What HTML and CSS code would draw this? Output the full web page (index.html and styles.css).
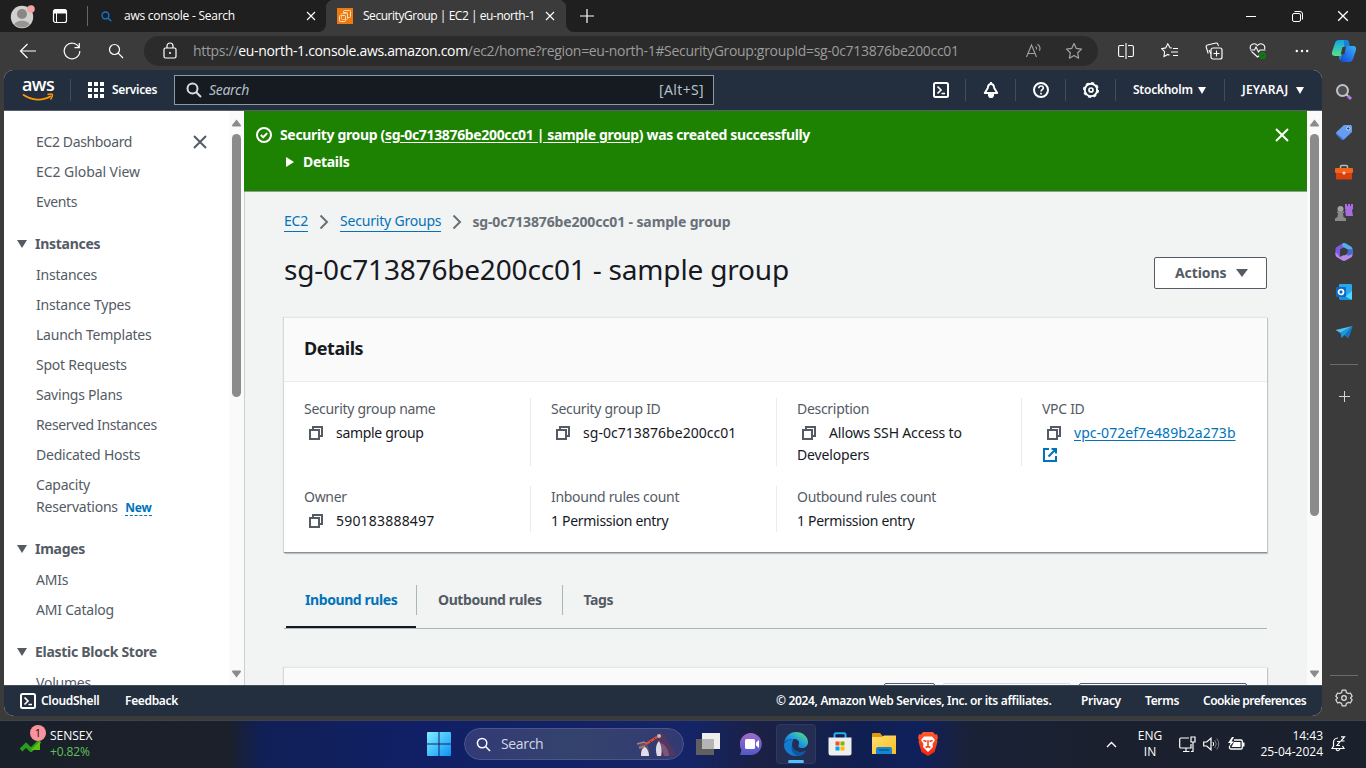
FILE: index.html
```html
<!DOCTYPE html>
<html lang="en">
<head>
<meta charset="utf-8">
<title>SecurityGroup | EC2 | eu-north-1</title>
<link rel="stylesheet" href="styles.css">
</head>
<body>
<svg class="defs" aria-hidden="true">
  <defs>
    <symbol id="copy" viewBox="0 0 16 16"><path d="M2 5h9v9H2z M5 5V2h9v9h-3" fill="none" stroke="#545b64" stroke-width="2"/></symbol>
    <symbol id="shell" viewBox="0 0 16 16"><rect x="1" y="1" width="14" height="14" rx="1.500" fill="none" stroke="#fff" stroke-width="2"/><path d="M4.500 4.500 8 8l-3.500 3.500M8.500 11.500h3.500" fill="none" stroke="#fff" stroke-width="1.700"/></symbol>
    <symbol id="cross" viewBox="0 0 16 16"><path d="m2 2 12 12M14 2 2 14" fill="none" stroke="currentColor" stroke-width="2"/></symbol>
    <symbol id="thin-cross" viewBox="0 0 10 10"><path d="m1 1 8 8M9 1 1 9" fill="none" stroke="currentColor" stroke-width="1.100"/></symbol>
    <symbol id="down" viewBox="0 0 10 8"><path d="M0 0h10L5 8z" fill="currentColor"/></symbol>
    <symbol id="lens" viewBox="0 0 16 16"><circle cx="6.500" cy="6.500" r="5" fill="none" stroke="currentColor" stroke-width="var(--w)"/><path d="m10.200 10.200 4.800 4.800" fill="none" stroke="currentColor" stroke-width="var(--w)"/></symbol>
    <symbol id="plus" viewBox="0 0 14 14"><path d="M7 0v14M0 7h14" stroke="currentColor" stroke-width="1.200"/></symbol>
    <linearGradient id="gWin" x1="0" y1="0" x2="1" y2="1"><stop offset="0" stop-color="#7ff0ff"/><stop offset="1" stop-color="#0c92f5"/></linearGradient>
    <linearGradient id="gEdge" x1="0" y1="1" x2="1" y2="0"><stop offset="0" stop-color="#0c59a4"/><stop offset=".5" stop-color="#1b9de2"/><stop offset="1" stop-color="#66eb6e"/></linearGradient>
    <linearGradient id="gCop" x1="0" y1="0" x2="0" y2="1"><stop offset="0" stop-color="#0fa5e9"/><stop offset="1" stop-color="#5be08a"/></linearGradient>
    <linearGradient id="gCop2" x1="0" y1="1" x2="1" y2="0"><stop offset="0" stop-color="#1746e0"/><stop offset="1" stop-color="#35b6f5"/></linearGradient>
    <linearGradient id="gPurple" x1="0" y1="0" x2="0" y2="1"><stop offset="0" stop-color="#a06ac8"/><stop offset="1" stop-color="#5059c9"/></linearGradient>
    <linearGradient id="gFolder" x1="0" y1="0" x2="1" y2="1"><stop offset="0" stop-color="#ffdf70"/><stop offset="1" stop-color="#fbbc24"/></linearGradient>
    <linearGradient id="gBrave" x1="0" y1="0" x2="0" y2="1"><stop offset="0" stop-color="#ff5a2a"/><stop offset="1" stop-color="#f4250c"/></linearGradient>
  </defs>
</svg>

<header class="titlebar">
  <div class="tb-left">
    <svg class="avatar" width="28" height="28" viewBox="0 0 28 28"><circle cx="14" cy="15" r="11.200" fill="#d2d0ce"/><circle cx="14" cy="12" r="5" fill="#8a8886"/><path d="M6.500 22.500c1.500-5 13.500-5 15 0a11 11 0 0 1-15 0z" fill="#979593"/><circle cx="23" cy="7" r="3.800" fill="#f6a3a0"/></svg>
    <svg class="tabicon" width="16" height="16" viewBox="0 0 16 16"><rect x="1.500" y="1.500" width="13" height="13" rx="2" fill="none" stroke="#fff" stroke-width="1.200"/><path d="M1.500 3a1.500 1.500 0 0 1 1.500-1.500h10A1.500 1.500 0 0 1 14.500 3v2.500h-13z" fill="#fff"/><path d="M4.500 5v9" stroke="#fff"/></svg>
    <i class="tb-sep"></i>
  </div>
  <div class="tab tab-idle"><svg class="tab-lens" width="11" height="11"><use href="#lens"/></svg><span class="tab-title">aws console - Search</span><svg class="tab-x" width="10" height="10"><use href="#thin-cross"/></svg></div>
  <div class="tab tab-active">
    <svg width="16" height="16" viewBox="0 0 16 16"><path d="M0 0h16v16H0z" fill="#ed7a11"/><rect x="2.500" y="7.500" width="6" height="6" rx="1" fill="none" stroke="#ffe0bd"/><rect x="4.500" y="5.500" width="6" height="6" rx="1" fill="none" stroke="#f9c48f"/><path d="M6.500 3.500q0-1 1-1h5q1 0 1 1v5q0 1-1 1h-2v-4q0-1-1-1h-3z" fill="none" stroke="#ffe0bd"/></svg>
    <span class="tab-title tab-title-active">SecurityGroup | EC2 | eu-north-1</span><svg class="tab-x" width="10" height="10"><use href="#thin-cross"/></svg>
  </div>
  <svg class="newtab" width="14" height="14"><use href="#plus"/></svg>
  <div class="winbtns">
    <span><svg width="10" height="10" viewBox="0 0 10 10"><path d="M0 5.500h10" stroke="#fff"/></svg></span>
    <span><svg width="11" height="11" viewBox="0 0 11 11"><rect x=".5" y="2.500" width="8" height="8" rx="1.500" fill="none" stroke="#fff"/><path d="M2.500.5H8A2.500 2.500 0 0 1 10.500 3v5.500" fill="none" stroke="#fff"/></svg></span>
    <span><svg width="12" height="12"><use href="#thin-cross"/></svg></span>
  </div>
</header>

<div class="toolbar">
  <div class="tool-slots">
    <span><svg width="18" height="16" viewBox="0 0 18 16"><path d="M17 8H1.500M8.500 1l-7 7 7 7" fill="none" stroke="#fff" stroke-width="1.200"/></svg></span>
    <span><svg width="18" height="18" viewBox="0 0 18 18"><path d="M16 5.500A7.800 7.800 0 1 0 16.800 9M16.300 1v4.700h-4.800" fill="none" stroke="#fff" stroke-width="1.200"/></svg></span>
    <span><svg width="16" height="16" class="nav-lens"><use href="#lens"/></svg></span>
  </div>
  <div class="address">
    <svg class="lock" width="14" height="18" viewBox="0 0 14 18"><rect x="1" y="6" width="12" height="10" rx="1.500" fill="none" stroke="#fff" stroke-width="1.200"/><path d="M4 6V4a3 3 0 0 1 6 0v2" fill="none" stroke="#fff" stroke-width="1.200"/><circle cx="7" cy="11" r="1" fill="#fff"/></svg>
    <span class="url">https://<b>eu-north-1.console.aws.amazon.com</b>/ec2/home?region=eu-north-1#SecurityGroup:groupId=sg-0c713876be200cc01</span>
    <div class="addr-tools">
      <span><svg width="18" height="16" viewBox="0 0 18 16"><path d="m1.500 14 5-12 5 12M3 10.500h7M10.500 3.500c1 .8 1.300 2 1 3M12.500 1.200c2.200 1.500 3 4 2 6.500" fill="none" stroke="#a3a3a3" stroke-width="1.100"/></svg></span>
      <span><svg width="18" height="18" viewBox="0 0 18 18"><path d="m9 1.500 2.300 4.900 5.200.7-3.800 3.700.9 5.400L9 13.600l-4.600 2.600.9-5.400L1.500 7.100l5.200-.7z" fill="none" stroke="#a3a3a3" stroke-width="1.200" stroke-linejoin="round"/></svg></span>
    </div>
  </div>
  <div class="tool-slots tool-right">
    <span><svg width="16" height="16" viewBox="0 0 16 16"><path d="M6 2.500H2A1.500 1.500 0 0 0 .6 4v8A1.500 1.500 0 0 0 2 13.500h4M10 2.500h4A1.500 1.500 0 0 1 15.400 4v8a1.500 1.500 0 0 1-1.400 1.500h-4M8 0v16" fill="none" stroke="#fff" stroke-width="1.100"/></svg></span>
    <span><svg width="18" height="16" viewBox="0 0 18 16"><path d="M11 5 9 4.800 6.800.8 4.700 4.900l-4 .8 2.900 3-.6 4.700 3.800-2 1.700.9M12 5.500h5M10 9h7M12 12.500h5" fill="none" stroke="#fff" stroke-width="1.100"/></svg></span>
    <span><svg width="18" height="18" viewBox="0 0 18 18"><path d="M13.500 4 12.800 2.200A1.500 1.500 0 0 0 11 1L2.500 3A1.500 1.500 0 0 0 1.200 5l2 6.500M4 8l2 4" fill="none" stroke="#fff" stroke-width="1.100"/><rect x="6" y="6" width="11" height="11" rx="2" fill="#3b3b3b" stroke="#fff" stroke-width="1.200"/><path d="M11.500 8.500v6M8.500 11.500h6" fill="none" stroke="#fff" stroke-width="1.100"/></svg></span>
    <span><svg width="18" height="18" viewBox="0 0 18 18"><path d="M1.500 7C0 2.500 5.500 0 8.500 3.500 11.500 0 17 2.500 15.500 7M1 8h4.500L7 5l2.500 5L11 8h5.500M2.500 9.500l6 5.500 2-1.500" fill="none" stroke="#fff" stroke-width="1.100"/><circle cx="13.500" cy="13.500" r="3.500" fill="#107c10"/><path d="m12 13.500 1 1 2-2" fill="none" stroke="#052"/></svg></span>
    <span><svg width="14" height="4" viewBox="0 0 14 4"><circle cx="1.800" cy="2" r="1.200" fill="#fff"/><circle cx="7" cy="2" r="1.200" fill="#fff"/><circle cx="12.200" cy="2" r="1.200" fill="#fff"/></svg></span>
  </div>
  <svg class="copilot" width="24" height="22" viewBox="0 0 24 22"><path d="M7 0h7.500L12 12q-1 4-4 4H3q-4 0-3-4L3 3Q4 0 7 0z" fill="url(#gCop)"/><path d="M17 22H9l3-12q1-4 4-4h5q4 0 3 4l-3 9q-1 3-4 3z" fill="url(#gCop2)"/><path d="M12 0h3q1.500 0 2 2l.8 4H15q-2 0-3 3L9 20q-1 1-1.500-1L6.500 16H8q3 0 4-4z" fill="#1583dc"/><path d="m10.500 7-1.800 7.500h3.600L14 7z" fill="#3b3b3b"/></svg>
</div>

<div class="middle">
  <div class="page">
    <div class="aws-header">
      <div class="logo"><span>aws</span><svg width="32" height="9" viewBox="0 0 32 9"><path d="M1 1.500C10 8 21 8 29 3" fill="none" stroke="#f90" stroke-width="1.800"/><path d="M25.500 1.500c3-.8 5-.6 5 .2s-.5 3-2 4.800" fill="none" stroke="#f90" stroke-width="1.500"/></svg></div>
      <i class="h-sep"></i>
      <svg class="grid" width="16" height="16" viewBox="0 0 16 16"><path d="M0 0h4v4H0zM6 0h4v4H6zM12 0h4v4h-4zM0 6h4v4H0zM6 6h4v4H6zM12 6h4v4h-4zM0 12h4v4H0zM6 12h4v4H6zM12 12h4v4h-4z" fill="#fff"/></svg>
      <span class="small services">Services</span>
      <div class="aws-search"><svg width="16" height="16"><use href="#lens"/></svg><em>Search</em><span>[Alt+S]</span></div>
      <div class="h-icons">
        <span><svg width="16" height="16"><use href="#shell"/></svg></span>
        <span><svg width="16" height="16" viewBox="0 0 16 16"><path d="M8 2c2.400 0 3 1.800 3.200 4l3 5H1.800l3-5C5 3.800 5.600 2 8 2z" fill="none" stroke="#fff" stroke-width="2" stroke-linejoin="round"/><path d="M7 0h2v2H7zM5 12h6v2l-1.500 2h-3L5 14z" fill="#fff"/></svg></span>
        <span><svg width="16" height="16" viewBox="0 0 16 16"><circle cx="8" cy="8" r="7" fill="none" stroke="#fff" stroke-width="2"/><path d="M5.800 6.200C5.800 3.300 10.300 3.300 10.300 6c0 1.700-2.300 1.800-2.300 3.600M8 10.800v1.600" fill="none" stroke="#fff" stroke-width="1.600"/></svg></span>
        <span><svg width="16" height="16" viewBox="0 0 16 16"><circle cx="8" cy="8" r="6.200" fill="none" stroke="#fff" stroke-width="2"/><circle cx="8" cy="8" r="7.200" fill="none" stroke="#fff" stroke-width="1.600" stroke-dasharray="3 2.650"/><circle cx="8" cy="8" r="2" fill="none" stroke="#fff" stroke-width="1.700"/></svg></span>
      </div>
      <span class="small region">Stockholm</span><svg class="caret" width="8" height="7" viewBox="0 0 10 8" preserveAspectRatio="none"><path d="M0 0h10L5 8z" fill="#fff"/></svg>
      <i class="h-sep sep-user"></i>
      <span class="small user">JEYARAJ</span><svg class="caret" width="8" height="7" viewBox="0 0 10 8" preserveAspectRatio="none"><path d="M0 0h10L5 8z" fill="#fff"/></svg>
    </div>

    <div class="body">
      <nav class="nav">
        <ul class="nav-list">
          <li class="wide">EC2 Dashboard<svg class="nav-close" width="16" height="16"><use href="#cross"/></svg></li>
          <li class="view">EC2 Global View</li>
          <li class="wide">Events</li>
          <li class="head"><svg width="10" height="8"><use href="#down"/></svg>Instances</li>
          <li>Instances</li><li>Instance Types</li><li>Launch Templates</li><li>Spot Requests</li><li>Savings Plans</li><li class="wide">Reserved Instances</li><li>Dedicated Hosts</li>
          <li class="two">Capacity<br>Reservations <b class="new">New</b></li>
          <li class="head"><svg width="10" height="8"><use href="#down"/></svg>Images</li>
          <li>AMIs</li><li>AMI Catalog</li>
          <li class="head"><svg width="10" height="8"><use href="#down"/></svg>Elastic Block Store</li>
          <li>Volumes</li>
        </ul>
        <div class="scroll"><svg width="9" height="8" viewBox="0 0 10 8"><path d="M5 0 10 6.500Q10 8 9 8H1Q0 8 0 6.500z" fill="#8b8b8b"/></svg><i class="thumb"></i><svg width="9" height="8" viewBox="0 0 10 8"><path d="M5 8 0 1.500Q0 0 1 0h8q1 0 1 1.500z" fill="#8b8b8b"/></svg></div>
      </nav>

      <main class="main">
        <div class="flash">
          <svg width="16" height="16" viewBox="0 0 16 16"><circle cx="8" cy="8" r="7" fill="none" stroke="#fff" stroke-width="2"/><path d="m4.800 8 2.400 2.300 4-4.200" fill="none" stroke="#fff" stroke-width="2"/></svg>
          <div class="flash-text"><p>Security group (<u>sg-0c713876be200cc01 | sample group</u>) was created successfully</p><p class="flash-details"><svg width="8" height="10" viewBox="0 0 8 10"><path d="m0 0 8 5-8 5z" fill="#fff"/></svg>Details</p></div>
          <svg class="flash-x" width="16" height="16"><use href="#cross"/></svg>
        </div>
        <div class="content">
          <div class="crumbs"><a>EC2</a><svg width="10" height="16" viewBox="0 0 10 16"><path d="m1.500 1.500 6.500 6.500-6.500 6.500" fill="none" stroke="#687078" stroke-width="2"/></svg><a>Security Groups</a><svg width="10" height="16" viewBox="0 0 10 16"><path d="m1.500 1.500 6.500 6.500-6.500 6.500" fill="none" stroke="#687078" stroke-width="2"/></svg><b>sg-0c713876be200cc01 - sample group</b></div>
          <div class="title-row"><h1>sg-0c713876be200cc01 - sample group</h1><div class="actions">Actions<svg width="12" height="8" viewBox="0 0 12 8"><path d="M0 0h12L6 8z" fill="#545b64"/></svg></div></div>
          <section class="card">
            <h2>Details</h2>
            <dl class="details">
              <div><dt>Security group name</dt><dd class="tight"><svg class="cp" width="16" height="16"><use href="#copy"/></svg>sample group</dd></div>
              <div><dt>Security group ID</dt><dd class="ident"><svg class="cp" width="16" height="16"><use href="#copy"/></svg>sg-0c713876be200cc01</dd></div>
              <div><dt>Description</dt><dd><svg class="cp" width="16" height="16"><use href="#copy"/></svg>Allows SSH Access to<br>Developers</dd></div>
              <div><dt>VPC ID</dt><dd class="ident"><svg class="cp" width="16" height="16"><use href="#copy"/></svg><a class="link">vpc-072ef7e489b2a273b</a><br><svg class="ext" width="16" height="16" viewBox="0 0 16 16"><path d="M7 2H2v12h12V9M9.500 2H14v4.500M14 2 6.500 9.500" fill="none" stroke="#0073bb" stroke-width="2"/></svg></dd></div>
              <div><dt>Owner</dt><dd class="digits"><svg class="cp" width="16" height="16"><use href="#copy"/></svg>590183888497</dd></div>
              <div><dt>Inbound rules count</dt><dd class="tight">1 Permission entry</dd></div>
              <div><dt>Outbound rules count</dt><dd class="tight">1 Permission entry</dd></div>
            </dl>
          </section>
          <div class="tabs"><span class="on">Inbound rules</span><span>Outbound rules</span><span>Tags</span></div>
          <section class="card rules"><i class="btn b1"></i><i class="btn b2"></i><i class="btn b3"></i></section>
        </div>
      </main>
      <div class="scroll scroll-main"><svg width="9" height="8" viewBox="0 0 10 8"><path d="M5 0 10 6.500Q10 8 9 8H1Q0 8 0 6.500z" fill="#8b8b8b"/></svg><i class="thumb"></i><svg width="9" height="8" viewBox="0 0 10 8"><path d="M5 8 0 1.500Q0 0 1 0h8q1 0 1 1.500z" fill="#8b8b8b"/></svg></div>
    </div>

    <footer class="aws-footer small"><svg width="16" height="16"><use href="#shell"/></svg><span class="f-shell">CloudShell</span><span>Feedback</span><span class="f-copy">© 2024, Amazon Web Services, Inc. or its affiliates.</span><span class="f-privacy">Privacy</span><span class="f-terms">Terms</span><span class="f-cookie">Cookie preferences</span></footer>
  </div>

  <aside class="side">
    <span><svg width="18" height="18" viewBox="0 0 18 18"><circle cx="7.500" cy="7.500" r="5.500" fill="#4a5056" stroke="#c4c2c0" stroke-width="2"/><path d="m11.500 11.500 1.500 1.500" stroke="#ccc" stroke-width="2"/><path d="m13 13 3 3" stroke="#b57bea" stroke-width="3"/></svg></span>
    <span><svg width="18" height="18" viewBox="0 0 18 18"><path d="M9 2h7l1 1v6l-8 7.500q-1 1-2 0L1.500 11q-1-1 0-2z" fill="#669df0"/><path d="M1 10l8 6.500-1 .5q-1 .5-2-.5l-4.500-4.500z" fill="#3d6fca"/><circle cx="13.300" cy="5.500" r="1.700" fill="#27446f" stroke="#d6e4ff"/></svg></span>
    <span><svg width="18" height="18" viewBox="0 0 18 18"><path d="M5.500 5V3.500q0-1 1-1h5q1 0 1 1V5" fill="none" stroke="#b8b6b4" stroke-width="1.500"/><rect x="0" y="5" width="18" height="5" rx="1" fill="#f4641d"/><path d="M1 10h16v5.500q0 1-1 1H2q-1 0-1-1z" fill="#d8400f"/><circle cx="9" cy="10" r="1.500" fill="#e4e4e4"/></svg></span>
    <span><svg width="18" height="18" viewBox="0 0 18 18"><path d="M10 1h2v2h1V1h2v2h1V1h2v5l-1 1 1 6h-7l-1-5 1-1-1-1z" fill="#a86de0"/><circle cx="5.500" cy="6" r="3" fill="#a5a3a1"/><path d="M2 8.500h7v1.500H8l.5 4 2.500 1.500V18H0v-2.500L2.500 14l.5-4H2z" fill="#8b8987"/></svg></span>
    <span><svg width="18" height="18" viewBox="0 0 18 18"><path d="M8.500 0 2 3.700Q.5 4.600.5 6.300v5.500L5 14V6.500L11 3z" fill="#7c5be0"/><path d="M8.500 0q1-.4 2 .2L16 3.500q1.500 1 1.500 2.700V9L12 6 8 4l-1-3z" fill="#50aee8"/><path d="M17.500 8v4q0 1.700-1.500 2.500L10.500 17.500q-1.500.8-3 0L2 14.300Q.5 13.400.5 11.500V9L5 14l8-4.500z" fill="#b68be8"/><path d="m12.500 6 5 .5V11L12.500 13z" fill="#4566d6"/><path d="M9 5.500 12.500 7v4L9 12.500 5.500 11V7z" fill="#3b3b3b"/></svg></span>
    <span><svg width="18" height="18" viewBox="0 0 18 18"><rect x="4" y="1" width="13" height="15" rx="1" fill="#28a8ea"/><path d="m4 9 7 4 6-5v8q0 1-1 1H5z" fill="#50d9ff"/><path d="m4 10 13 7H5z" fill="#1490df"/><rect x="1" y="4" width="10" height="10" rx="1" fill="#0f69c4"/><circle cx="6" cy="9" r="2.500" fill="none" stroke="#fff" stroke-width="1.700"/></svg></span>
    <span><svg width="18" height="18" viewBox="0 0 18 18"><path d="M17.500 3 .5 7l5 3z" fill="#4cc2f1"/><path d="m17.500 3-12 7 1 5 3-3 4 3z" fill="#1e98dc"/><path d="m17.500 3-8 9 4 3z" fill="#0f74c5"/></svg></span>
    <i class="s-line"></i>
    <svg class="s-plus" width="11" height="11"><use href="#plus"/></svg>
    <i class="s-line s-line2"></i>
    <svg class="s-gear" width="18" height="18" viewBox="0 0 18 18"><path d="m7.200 1.200-.6 2.300-1.700 1L2.600 4 .8 7.200l1.700 1.800-1.700 1.800L2.600 14l2.300-.6 1.700 1 .6 2.400h3.600l.6-2.400 1.700-1 2.300.6 1.800-3.200L15.500 9l1.700-1.800L15.400 4l-2.300.5-1.700-1-.6-2.300z" fill="none" stroke="#e0e0e0" stroke-width="1.200" stroke-linejoin="round"/><circle cx="9" cy="9" r="2.300" fill="none" stroke="#e0e0e0" stroke-width="1.200"/></svg>
  </aside>
</div>

<footer class="taskbar">
  <div class="widget"><div class="w-icon"><svg width="22" height="13" viewBox="0 0 22 13"><path d="m1 11 5-5 5 5 9-9" fill="none" stroke="#2a9b1b" stroke-width="4"/><path d="m11 11 9-9v9z" fill="#5fc014"/></svg><b>1</b></div><div class="w-text">SENSEX<br><span>+0.82%</span></div></div>
  <div class="t-center">
    <svg class="start" width="24" height="24" viewBox="0 0 24 24"><path d="M1 0h10.500v11.500H0V1q0-1 1-1zM12.500 0H23q1 0 1 1v10.500H12.500zM0 12.500h11.500V24H1q-1 0-1-1zM12.500 12.500H24V23q0 1-1 1H12.500z" fill="url(#gWin)"/></svg>
    <div class="t-search"><svg width="15" height="15"><use href="#lens"/></svg><span>Search</span>
      <svg class="puffin" width="40" height="26" viewBox="0 0 40 26"><path d="M5 25c0-4 1-7-3-10l4-3c5-1 8 5 7 13z" fill="#6b4c72"/><path d="M5 25c0-5 1-8 4-9 3 2 4 6 4 9z" fill="#dfe0ea"/><path d="m1 13 7-2 3 2M3 17l6-2" fill="none" stroke="#a3837b" stroke-width="1.500"/><path d="M21 25c-2-8 0-13 0-19 1-5 7-6 9 1 1 4 8 9 9 18z" fill="#54375f"/><path d="M24 12c4 0 9 6 9 13h-5z" fill="#7a5679"/><path d="M21 25c-2-7-1-12 2-15 3 5 3 11 2 15z" fill="#dedbe6"/><path d="m10 13 11-7" stroke="#dc5138" stroke-width="2.500"/><path d="m14 10 2 2M18 7l2 2" stroke="#7d2130"/><circle cx="23" cy="5" r="2" fill="#cdb8b4"/></svg></div>
    <div class="apps">
      <span><svg width="24" height="24" viewBox="0 0 24 24"><rect x="6" y="1" width="18" height="16" fill="#eee"/><rect x="0" y="7" width="18" height="16" fill="#60605f"/><path d="M6 7h12v10H6z" fill="#b5b5b5"/></svg></span>
      <span><svg width="24" height="24" viewBox="0 0 24 24"><path d="M0 23l1.500-5A11 11 0 1 1 12 23z" fill="url(#gPurple)"/><rect x="5" y="7" width="10" height="10" rx="1.500" fill="#fff"/><path d="m16 10.500 3-2.500v8l-3-2.500z" fill="#fff"/></svg></span>
      <span class="active"><svg width="24" height="24" viewBox="0 0 24 24"><path d="M0 11C1 4 6 0 12 0c7 0 12 5 12 10 0 4-3 6-6 6-4 0-4-2-3-4 1-3-2-5-5-5C5 7 1 9 0 11z" fill="url(#gEdge)"/><path d="M10 7C4 7 0 10 0 13c0 6 5 11 12 11 5 0 8-2 10-5-7 3-14-1-14-6 0-3 1-5 2-6z" fill="#137bd0"/><path d="M8 13c-2 5 2 11 7 11 3-.5 6-2.500 7-5-7 3-14-1-14-6z" fill="#0c57a2"/></svg></span>
      <span><svg width="24" height="24" viewBox="0 0 24 24"><path d="M6.500 6V2.500Q6.500 1.200 8 1.200h8q1.500 0 1.500 1.300V6" fill="none" stroke="#28b1ec" stroke-width="2"/><path d="M.5 5.500h23V21q0 2.500-2.500 2.500H3Q.5 23.500.5 21z" fill="#eee"/><path d="M7.500 9.500h4v4h-4z" fill="#f25022"/><path d="M12.500 9.500h4v4h-4z" fill="#7fba00"/><path d="M7.500 14.500h4v4h-4z" fill="#00a4ef"/><path d="M12.500 14.500h4v4h-4z" fill="#ffb900"/></svg></span>
      <span><svg width="24" height="24" viewBox="0 0 24 24"><path d="M0 2q0-1 1-1h7l2.500 3H24v6H0z" fill="#dd9b0b"/><path d="M0 5h10l2-1.500h12V22H0z" fill="url(#gFolder)"/><path d="M4 22v-5q0-2 2-2h12q2 0 2 2v5z" fill="#1387cf"/><path d="M7 18h10" stroke="#0b5a9d" stroke-width="1.500"/></svg></span>
      <span><svg width="20" height="24" viewBox="0 0 20 24"><path d="M5 0h10l2 2.500 2-.2L20 6l-1 2 .5 2-3 10L10 24l-6.500-4-3-10L1 8 0 6l1-3.700 2 .2z" fill="url(#gBrave)"/><path d="M6 4.500h8L17 8l-2.500 4 .5 3-5 5-5-5 .5-3L3 8z" fill="#fff"/><path d="m5.500 8.500 3 1M14.500 8.500l-3 1M10 8v6M7.500 15.500l2.500-1 2.500 1" fill="none" stroke="#f0380f" stroke-width="1.400"/></svg></span>
    </div>
  </div>
  <div class="tray">
    <svg class="chev" width="11" height="7" viewBox="0 0 11 7"><path d="m1 6 4.500-4.500L10 6" fill="none" stroke="#fff" stroke-width="1.400"/></svg>
    <div class="lang">ENG<br>IN</div>
    <svg class="net" width="17" height="17" viewBox="0 0 17 17"><path d="M10 2H2Q.7 2 .7 3.300v7.400Q.7 12 2 12h10V8M7 12v3.500M4 15.500h6.500" fill="none" stroke="#fff" stroke-width="1.200"/><path d="M12 1h4v5h-4zM14 6v9.500h-2" fill="none" stroke="#fff" stroke-width="1.200"/></svg>
    <svg class="vol" width="17" height="14" viewBox="0 0 17 14"><path d="M.7 5h3L8 1.200v11.600L3.700 9h-3z" fill="none" stroke="#fff" stroke-width="1.200"/><path d="M10 5q1.300 2 0 4" fill="none" stroke="#fff"/><path d="M11.800 3.200q3 3.800 0 7.600M13.800 1.500q4 5.500 0 11" fill="none" stroke="#777c87"/></svg>
    <svg class="bat" width="17" height="14" viewBox="0 0 17 14"><path d="M6 3h7q1.300 0 1.300 1.300v6.400Q14.300 12 13 12H3q-1.500 0-1.500-1.500V9" fill="none" stroke="#fff" stroke-width="1.300"/><path d="M6 5h6.500v5H3.500zM15 5.500h1.500v4H15zM4 0 0 6h2.500L1 10l5-5.500H3.500L6 0z" fill="#fff"/></svg>
    <div class="clock">14:43<br>25-04-2024</div>
    <svg class="bell" width="15" height="16" viewBox="0 0 15 16"><path d="M7 2C4 2 2.500 4 2.500 6.500V10L1 12.500h12L11.500 10M5 13q1.500 3.500 4 0M6 5.500h3l-3 4h3M10 .8h3.500L10 5h3.500" fill="none" stroke="#fff" stroke-width="1.200"/></svg>
  </div>
</footer>
</body>
</html>
```

FILE: styles.css
```css
* { box-sizing: border-box; }
body { margin: 0; width: 1366px; height: 768px; overflow: hidden; background: #3b3b3b; color: #16191f; font: 14px/22px "Noto Sans", sans-serif; display: flex; flex-direction: column; }
p, h1, h2, ul, dl, dd { margin: 0; padding: 0; list-style: none; }
svg { display: block; flex: none; }
i { display: block; flex: none; }
.defs { width: 0; height: 0; position: absolute; }

/* Browser title bar */
.titlebar { flex: none; height: 32px; display: flex; align-items: center; background: linear-gradient(90deg, #1f1f1f 80px, #3b3b3b 80px 640px, #1f1f1f 640px); color: #fff; font: 12px/16px "Open Sans", sans-serif; }
.tb-left { width: 88px; height: 32px; display: flex; align-items: center; padding-left: 8px; background: #1f1f1f; }
.tabicon { margin-left: 16px; }
.tb-sep { width: 1px; height: 20px; margin-left: 19px; background: #666; }
.tab { height: 32px; display: flex; align-items: center; white-space: nowrap; }
.tab-idle { width: 238px; padding-left: 13px; background: #1f1f1f; border-bottom-right-radius: 8px; }
.tab-lens { --w: 2px; color: #1474cf; }
.tab-title { width: 182px; margin-left: 12px; letter-spacing: -.25px; }
.tab-active { width: 240px; padding-left: 11px; background: radial-gradient(circle at 8px 8px, #3b3b3b 8px, #1f1f1f 8.5px) 0 0 / 8px 8px no-repeat, radial-gradient(circle at 0 8px, #3b3b3b 8px, #1f1f1f 8.5px) 100% 0 / 8px 8px no-repeat, #3b3b3b; }
.tab-title-active { width: 182px; margin-left: 10px; letter-spacing: -.46px; }
.tab-x { margin-right: 5px; }
.newtab { width: 48px; height: 32px; padding: 9px 20px 9px 14px; background: #1f1f1f; border-bottom-left-radius: 8px; }
.winbtns { flex: 1; height: 32px; display: flex; justify-content: flex-end; background: #1f1f1f; }
.winbtns span { width: 46px; display: flex; align-items: center; justify-content: center; }

/* Browser toolbar */
.toolbar { flex: none; height: 38px; display: flex; align-items: center; padding-left: 6px; }
.tool-slots { display: flex; }
.tool-slots span { width: 44px; display: flex; justify-content: center; align-items: center; }
.nav-lens { --w: 1.2px; color: #fff; }
.address { width: 954px; height: 30px; margin-left: 6px; border-radius: 15px; background: #2b2b2b; display: flex; align-items: center; }
.lock { margin-left: 19px; }
.url { width: 826px; margin-left: 16px; font: 14px/20px "Open Sans", sans-serif; letter-spacing: -.32px; color: #9c9c9c; white-space: nowrap; }
.url b { font-weight: 400; color: #fff; }
.addr-tools { display: flex; margin-left: -5px; }
.addr-tools span { width: 40px; display: flex; justify-content: center; align-items: center; }
.tool-right { margin-left: 6px; }
.copilot { margin-left: 8px; }

/* Window body */
.middle { flex: none; height: 650px; display: flex; padding-left: 4px; }
.page { width: 1318px; height: 646px; border-radius: 9px 9px 10px 10px; overflow: hidden; background: #fff; display: flex; flex-direction: column; }
.small { font-size: 12px; font-weight: 600; letter-spacing: -.33px; color: #fff; }
.aws-header { flex: none; height: 41px; background: #232f3e; border-bottom: 1px solid #5a5f6c; display: flex; align-items: center; }
.logo { width: 32px; height: 26px; margin-left: 18px; color: #fff; font: 600 18px/14px "Open Sans", sans-serif; letter-spacing: -.6px; text-align: center; }
.logo svg { margin-top: 2px; }
.h-sep { width: 1px; height: 22px; background: #414d5c; margin-left: 16px; }
.grid { margin-left: 17px; }
.services { width: 70px; padding-left: 8px; }
.aws-search { width: 540px; height: 30px; border: 1px solid #8d99a5; background: #161a21; display: flex; align-items: center; padding: 0 9px 0 11px; color: #b3c0cb; letter-spacing: -.3px; }
.aws-search svg { --w: 2px; color: #d7dde2; }
.aws-search em { flex: 1; margin-left: 7px; }
.aws-search span { letter-spacing: .35px; }
.h-icons { display: flex; margin-left: 202px; }
.h-icons span { width: 50px; height: 22px; border-right: 1px solid #414d5c; display: flex; align-items: center; justify-content: center; }
.region { width: 60px; margin-left: 17px; letter-spacing: -.25px; }
.caret { margin-left: 5px; }
.sep-user { margin-left: 18px; }
.user { width: 48px; margin-left: 17px; letter-spacing: .2px; }
.user + .caret { margin-left: 6px; }
.body { flex: 1; min-height: 0; display: flex; }

/* Side navigation */
.nav { width: 241px; display: flex; overflow: hidden; border-right: 1px solid #c9cfd4; color: #545b64; }
.nav-list { width: 225px; padding: 20px 0 0 32px; letter-spacing: -.22px; }
.nav-list li { height: 22px; margin-bottom: 8px; white-space: nowrap; display: flex; align-items: center; }
.nav-list .wide { letter-spacing: -.36px; }
.nav-list .view { letter-spacing: -.06px; }
.nav-list .two { display: block; height: 44px; }
.nav-list .head { margin: 20px 0 9px -19px; font-weight: 700; letter-spacing: -.28px; }
.head svg { margin-right: 8px; }
.nav-close { margin-left: 60px; color: #545b64; }
.new { margin-left: 4px; font-size: 12px; line-height: 15px; color: #0073bb; border-bottom: 1px dashed #0073bb; display: inline-block; }
.scroll { width: 15px; display: flex; flex-direction: column; align-items: center; background: #fafafa; padding: 8px 0 7px; }
.scroll .thumb { width: 9px; height: 263px; margin-top: 7px; margin-bottom: auto; border-radius: 5px; background: #8b8b8b; }
.scroll-main .thumb { height: 382px; }

/* Main column */
.main { width: 1062px; background: #f2f3f3; }
.flash { width: 1063px; height: 81px; margin-left: -1px; background: #1d8102; border-bottom: 1px solid #8f9ba0; color: #fff; display: flex; padding: 16px 17px 0 12px; font-weight: 700; letter-spacing: -.345px; position: relative; }
.flash-text { flex: 1; margin: -3px 0 0 8px; }
.flash-details { display: flex; align-items: center; margin: 5px 0 0 6px; letter-spacing: -.3px; }
.flash-details svg { margin-right: 9px; }
.flash u { text-underline-offset: 2px; }
.content { padding: 19px 40px 0 39px; }
.crumbs { height: 22px; display: flex; align-items: center; letter-spacing: -.2px; }
.crumbs a { color: #0073bb; line-height: 18px; padding-bottom: 1px; border-bottom: 1px solid #0073bb; }
.crumbs svg { margin: 0 11px; }
.crumbs b { margin-left: -1px; color: #687078; letter-spacing: -.13px; }
.title-row { display: flex; justify-content: space-between; align-items: flex-start; margin-top: 18px; }
h1 { font-size: 28px; line-height: 36px; font-weight: 400; letter-spacing: -.18px; }
.actions { width: 113px; height: 32px; margin-top: 6px; border: 1px solid #545b64; border-radius: 2px; background: #fff; color: #545b64; font-weight: 700; letter-spacing: -.1px; line-height: 30px; padding-left: 20px; display: flex; align-items: center; }
.actions svg { margin-left: 10px; }
.card { background: #fff; border: solid; border-width: 1px 0; border-color: #e3e7e7 #fff #879196; margin-top: 28px; box-shadow: 1px 1px 1px #00141e33, -1px 0 1px #00141e1f; }
h2 { height: 64px; padding-left: 20px; border-bottom: 1px solid #eaeded; background: #fafafa; font-size: 18px; line-height: 60px; letter-spacing: -.45px; }
.details { height: 170px; display: grid; grid-template-columns: 246px 246px 245px 1fr; grid-template-rows: 68px 46px; row-gap: 20px; padding-top: 16px; letter-spacing: -.16px; }
.details > div { border-left: 1px solid #eaeded; padding-left: 20px; white-space: nowrap; }
.details > div:nth-child(4n + 1) { border-left: 0; }
dt { color: #545b64; letter-spacing: -.3px; }
dd { margin-top: 2px; }
.tight { letter-spacing: -.3px; }
.ident { letter-spacing: .04px; }
.digits { letter-spacing: .2px; }
.cp { display: inline-block; vertical-align: -3px; margin: 0 12px 0 4px; }
.ext { display: inline-block; vertical-align: -3px; }
.link { color: #0073bb; text-decoration: underline; text-underline-offset: 2px; }
.tabs { height: 59px; margin-top: 17px; border-bottom: 1px solid #aab7b8; display: flex; align-items: flex-start; color: #545b64; font-weight: 700; letter-spacing: -.42px; }
.tabs span { height: 30px; line-height: 30px; padding: 0 20px 0 21px; margin-top: 15px; border-left: 1px solid #aab7b8; }
.tabs .on { height: 43px; margin-left: 2px; width: 130px; border: 0; border-bottom: 2px solid #16191f; color: #0073bb; padding: 0 0 0 19px; }
.rules { height: 90px; margin-top: 38px; background: #fafafa; display: flex; justify-content: flex-end; gap: 8px; padding: 15px 20px; }
.btn { height: 32px; border: 1px solid #545b64; border-radius: 2px; background: #fff; }
.b1 { width: 51px; }
.b2 { width: 128px; border-color: #d5dbdb; }
.b3 { width: 168px; }

.aws-footer { flex: none; height: 31px; background: #232f3e; border-top: 1px solid #414d5c; display: flex; align-items: center; padding: 0 16px; white-space: nowrap; }
.f-shell { width: 84px; margin-left: 5px; }
.f-copy { width: 275px; margin-left: auto; }
.f-privacy { width: 39px; margin-left: 30px; }
.f-terms { width: 33px; margin-left: 25px; }
.f-cookie { width: 103px; margin-left: 25px; letter-spacing: -.53px; }

/* Browser sidebar */
.side { width: 44px; display: flex; flex-direction: column; align-items: center; padding-top: 2px; }
.side span { height: 40px; display: flex; align-items: center; }
.s-line { width: 28px; height: 1px; margin-top: 12px; background: #6a6a6a; }
.s-plus { margin-top: 26px; color: #ddd; }
.s-line2 { margin-top: 273px; }
.s-gear { margin-top: 13px; }

/* Taskbar */
.taskbar { flex: none; height: 48px; border-top: 1px solid #3d4150; display: flex; align-items: center; color: #fff; font: 12px/16px "Open Sans", sans-serif; background: linear-gradient(90deg, #1a2029 0, #1b202b 230px, #101f55 260px, #112066 420px, #142466 690px, #1b2144 760px, #101f51 860px, #10205b 920px, #192137 970px, #1a202d 1100px, #1a202c 100%); }
.widget { width: 427px; display: flex; padding-left: 20px; margin-top: -1px; }
.w-icon { width: 30px; height: 32px; position: relative; padding-top: 11px; }
.w-icon b { position: absolute; left: 10px; top: -3px; width: 16px; height: 16px; border-radius: 8px; background: #fb939d; color: #111; font-weight: 400; font-size: 11px; text-align: center; }
.w-text span { color: #5fc25a; letter-spacing: -.1px; }
.t-center { display: flex; align-items: center; margin-top: -1px; }
.t-search { width: 220px; height: 32px; margin-left: 13px; border-radius: 16px; border: 1px solid #4c5586; background: linear-gradient(90deg, #323a77, #34436d 50%, #323a73); display: flex; align-items: center; padding: 0 7px 0 11px; font-size: 14px; letter-spacing: -.35px; color: #d5d8e5; }
.t-search svg { --w: 1.6px; color: #fff; }
.t-search span { flex: 1; margin-left: 10px; }
.apps { display: flex; margin-left: 4px; gap: 4px; }
.apps span { width: 40px; height: 40px; display: flex; align-items: center; justify-content: center; }
.apps .active { background: #242d53; border-radius: 4px; border: 1px solid #303a5e; position: relative; }
.apps .active::after { content: ""; position: absolute; bottom: 0; left: 11px; width: 16px; height: 3px; border-radius: 2px; background: #4cc2ff; }
.tray { flex: 1; display: flex; align-items: center; justify-content: flex-end; padding-right: 20px; margin-top: -1px; }
.lang { width: 40px; margin-left: 13px; text-align: center; }
.net { margin-left: 9px; }
.vol { margin-left: 7px; }
.bat { margin-left: 8px; }
.clock { width: 72px; margin-left: 6px; text-align: right; }
.bell { margin-left: 8px; }
```
